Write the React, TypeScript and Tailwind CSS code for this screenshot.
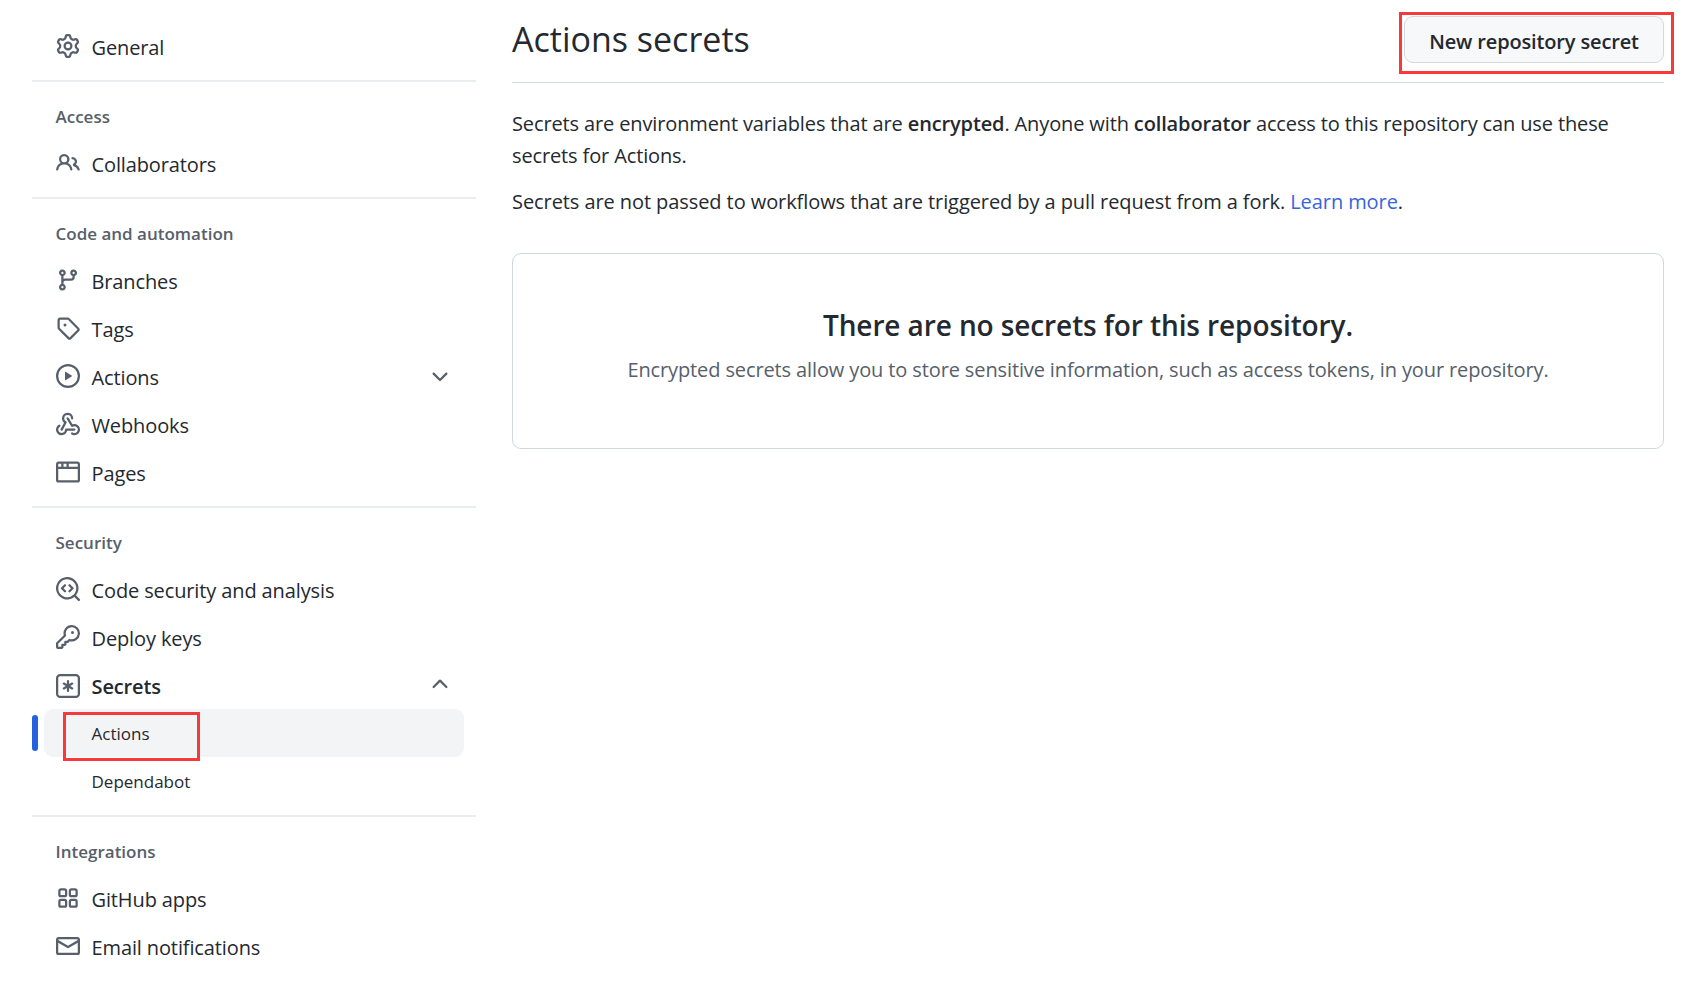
const icons = {
  gear: 'M8 0a8.2 8.2 0 0 1 .701.031C9.444.095 9.99.645 10.16 1.29l.288 1.107c.018.066.079.158.212.224.231.114.454.243.668.386.123.082.233.09.299.071l1.103-.303c.644-.176 1.392.021 1.82.63.27.385.506.792.704 1.218.315.675.111 1.422-.364 1.891l-.814.806c-.049.048-.098.147-.088.294.016.257.016.515 0 .772-.01.147.038.246.088.294l.814.806c.475.469.679 1.216.364 1.891a7.977 7.977 0 0 1-.704 1.217c-.428.61-1.176.807-1.82.63l-1.102-.302c-.067-.019-.177-.011-.3.071a5.909 5.909 0 0 1-.668.386c-.133.066-.194.158-.211.224l-.29 1.106c-.168.646-.715 1.196-1.458 1.26a8.006 8.006 0 0 1-1.402 0c-.743-.064-1.289-.614-1.458-1.26l-.289-1.106c-.018-.066-.079-.158-.212-.224a5.738 5.738 0 0 1-.668-.386c-.123-.082-.233-.09-.299-.071l-1.103.303c-.644.176-1.392-.021-1.82-.63a8.12 8.12 0 0 1-.704-1.218c-.315-.675-.111-1.422.363-1.891l.815-.806c.05-.048.098-.147.088-.294a6.214 6.214 0 0 1 0-.772c.01-.147-.038-.246-.088-.294l-.815-.806C.635 6.045.431 5.298.746 4.623a7.92 7.92 0 0 1 .704-1.217c.428-.61 1.176-.807 1.82-.63l1.102.302c.067.019.177.011.3-.071.214-.143.437-.272.668-.386.133-.066.194-.158.211-.224l.29-1.106C6.009.645 6.556.095 7.299.03 7.53.01 7.764 0 8 0Zm-.571 1.525c-.036.003-.108.036-.137.146l-.289 1.105c-.147.561-.549.967-.998 1.189-.173.086-.34.183-.5.29-.417.278-.97.423-1.529.27l-1.103-.303c-.109-.03-.175.016-.195.045-.22.312-.412.644-.573.99-.014.031-.021.11.059.19l.815.806c.411.406.562.957.53 1.456a4.709 4.709 0 0 0 0 .582c.032.499-.119 1.05-.53 1.456l-.815.806c-.081.08-.073.159-.059.19.162.346.353.677.573.989.02.03.085.076.195.046l1.102-.303c.56-.153 1.113-.008 1.53.27.161.107.328.204.501.29.447.222.85.629.997 1.189l.289 1.105c.029.109.101.143.137.146a6.6 6.6 0 0 0 1.142 0c.036-.003.108-.036.137-.146l.289-1.105c.147-.561.549-.967.998-1.189.173-.086.34-.183.5-.29.417-.278.97-.423 1.529-.27l1.103.303c.109.029.175-.016.195-.045.22-.313.411-.644.573-.99.014-.031.021-.11-.059-.19l-.815-.806c-.411-.406-.562-.957-.53-1.456a4.709 4.709 0 0 0 0-.582c-.032-.499.119-1.05.53-1.456l.815-.806c.081-.08.073-.159.059-.19a6.464 6.464 0 0 0-.573-.989c-.02-.03-.085-.076-.195-.046l-1.102.303c-.56.153-1.113.008-1.53-.27a4.44 4.44 0 0 0-.501-.29c-.447-.222-.85-.629-.997-1.189l-.289-1.105c-.029-.11-.101-.143-.137-.146a6.6 6.6 0 0 0-1.142 0ZM11 8a3 3 0 1 1-6 0 3 3 0 0 1 6 0ZM9.5 8a1.5 1.5 0 1 0-3.001.001A1.5 1.5 0 0 0 9.5 8Z',
  people: 'M2 5.5a3.5 3.5 0 1 1 5.898 2.549 5.508 5.508 0 0 1 3.034 4.084.75.75 0 1 1-1.482.235 4 4 0 0 0-7.9 0 .75.75 0 0 1-1.482-.236A5.507 5.507 0 0 1 3.102 8.05 3.493 3.493 0 0 1 2 5.5ZM11 4a3.001 3.001 0 0 1 2.22 5.018 5.01 5.01 0 0 1 2.56 3.012.749.749 0 0 1-.885.954.752.752 0 0 1-.549-.514 3.507 3.507 0 0 0-2.522-2.372.75.75 0 0 1-.574-.73v-.352a.75.75 0 0 1 .416-.672A1.5 1.5 0 0 0 11 5.5.75.75 0 0 1 11 4Zm-5.5-.5a2 2 0 1 0-.001 3.999A2 2 0 0 0 5.5 3.5Z',
  branch: 'M9.5 3.25a2.25 2.25 0 1 1 3 2.122V6A2.5 2.5 0 0 1 10 8.5H6a1 1 0 0 0-1 1v1.128a2.251 2.251 0 1 1-1.5 0V5.372a2.25 2.25 0 1 1 1.5 0v1.836A2.493 2.493 0 0 1 6 7h4a1 1 0 0 0 1-1v-.628A2.25 2.25 0 0 1 9.5 3.25Zm-6 0a.75.75 0 1 0 1.5 0 .75.75 0 0 0-1.5 0Zm8.25-.75a.75.75 0 1 0 0 1.5.75.75 0 0 0 0-1.5ZM4.25 12a.75.75 0 1 0 0 1.5.75.75 0 0 0 0-1.5Z',
  tag: 'M1 7.775V2.75C1 1.784 1.784 1 2.75 1h5.025c.464 0 .91.184 1.238.513l6.25 6.25a1.75 1.75 0 0 1 0 2.474l-5.026 5.026a1.75 1.75 0 0 1-2.474 0l-6.25-6.25A1.752 1.752 0 0 1 1 7.775Zm1.5 0c0 .066.026.13.073.177l6.25 6.25a.25.25 0 0 0 .354 0l5.025-5.025a.25.25 0 0 0 0-.354l-6.25-6.25a.25.25 0 0 0-.177-.073H2.75a.25.25 0 0 0-.25.25ZM6 5a1 1 0 1 1 0 2 1 1 0 0 1 0-2Z',
  play: 'M8 0a8 8 0 1 1 0 16A8 8 0 0 1 8 0ZM1.5 8a6.5 6.5 0 1 0 13 0 6.5 6.5 0 0 0-13 0Zm4.879-2.773 4.264 2.559a.25.25 0 0 1 0 .428l-4.264 2.559A.25.25 0 0 1 6 10.559V5.442a.25.25 0 0 1 .379-.215Z',
  webhook: 'M5.5 4.25a2.25 2.25 0 0 1 4.5 0 .75.75 0 0 0 1.5 0 3.75 3.75 0 1 0-6.14 2.889l-2.272 4.258a.75.75 0 0 0 1.324.706L7 7.25a.75.75 0 0 0-.309-1.015A2.25 2.25 0 0 1 5.5 4.25Z M7.364 3.607a.75.75 0 0 1 1.03.257l2.608 4.349a3.75 3.75 0 1 1-.628 6.785.75.75 0 0 1 .752-1.299 2.25 2.25 0 1 0-.033-3.88.75.75 0 0 1-1.03-.256L7.107 4.636a.75.75 0 0 1 .257-1.03Z M2.9 8.776A.75.75 0 0 1 2.625 9.8 2.25 2.25 0 1 0 6 11.75a.75.75 0 0 1 .75-.751h5.5a.75.75 0 0 1 0 1.5H7.425a3.751 3.751 0 1 1-5.55-3.998.75.75 0 0 1 1.024.274Z',
  browser: 'M0 2.75C0 1.784.784 1 1.75 1h12.5c.966 0 1.75.784 1.75 1.75v10.5A1.75 1.75 0 0 1 14.25 15H1.75A1.75 1.75 0 0 1 0 13.25ZM14.5 6h-13v7.25c0 .138.112.25.25.25h12.5a.25.25 0 0 0 .25-.25Zm-6-3.5v2h6V2.75a.25.25 0 0 0-.25-.25ZM5 2.5v2h2v-2Zm-3.25 0a.25.25 0 0 0-.25.25V4.5h2v-2Z',
  codescan: 'M8.47 4.97a.75.75 0 0 0 0 1.06L9.94 7.5 8.47 8.97a.75.75 0 1 0 1.06 1.06l2-2a.75.75 0 0 0 0-1.06l-2-2a.75.75 0 0 0-1.06 0ZM6.53 6.03a.75.75 0 0 0-1.06-1.06l-2 2a.75.75 0 0 0 0 1.06l2 2a.75.75 0 1 0 1.06-1.06L5.06 7.5l1.47-1.47Z M12.246 13.307a7.501 7.501 0 1 1 1.06-1.06l2.474 2.473a.749.749 0 0 1-.326 1.275.749.749 0 0 1-.734-.215ZM1.5 7.5a6.002 6.002 0 0 0 3.608 5.504 6.002 6.002 0 0 0 6.486-1.117.75.75 0 0 1 .292-.293A6 6 0 1 0 1.5 7.5Z',
  key: 'M10.5 0a5.499 5.499 0 1 1-1.288 10.848l-.932.932a.749.749 0 0 1-.53.22H7v.75a.749.749 0 0 1-.22.53l-.5.5a.749.749 0 0 1-.53.22H5v.75a.749.749 0 0 1-.22.53l-.5.5a.749.749 0 0 1-.53.22h-2A1.75 1.75 0 0 1 0 14.25v-2c0-.199.079-.389.22-.53l4.932-4.932A5.5 5.5 0 0 1 10.5 0Zm-4 5.5c-.001.431.069.86.205 1.269a.75.75 0 0 1-.181.768L1.5 12.56v1.69c0 .138.112.25.25.25h1.69l.06-.06v-1.19a.75.75 0 0 1 .75-.75h1.19l.06-.06v-1.19a.75.75 0 0 1 .75-.75h1.19l1.023-1.025a.75.75 0 0 1 .768-.18A4 4 0 1 0 6.5 5.5ZM11 6a1 1 0 1 1 0-2 1 1 0 0 1 0 2Z',
  asterisk: 'M0 2.75A2.75 2.75 0 0 1 2.75 0h10.5A2.75 2.75 0 0 1 16 2.75v10.5A2.75 2.75 0 0 1 13.25 16H2.75A2.75 2.75 0 0 1 0 13.25ZM2.75 1.5c-.69 0-1.25.56-1.25 1.25v10.5c0 .69.56 1.25 1.25 1.25h10.5c.69 0 1.25-.56 1.25-1.25V2.75c0-.69-.56-1.25-1.25-1.25Z M8 4a.75.75 0 0 1 .75.75V6.7l1.69-.975a.75.75 0 0 1 .75 1.3L9.5 8l1.69.976a.75.75 0 0 1-.75 1.298L8.75 9.3v1.95a.75.75 0 0 1-1.5 0V9.299l-1.69.975a.75.75 0 0 1-.75-1.299L6.5 8l-1.69-.975a.75.75 0 0 1 .75-1.3l1.69.976V4.75A.75.75 0 0 1 8 4Z',
  apps: 'M1.5 3.25c0-.966.784-1.75 1.75-1.75h2.5c.966 0 1.75.784 1.75 1.75v2.5A1.75 1.75 0 0 1 5.75 7.5h-2.5A1.75 1.75 0 0 1 1.5 5.75Zm7 0c0-.966.784-1.75 1.75-1.75h2.5c.966 0 1.75.784 1.75 1.75v2.5a1.75 1.75 0 0 1-1.75 1.75h-2.5A1.75 1.75 0 0 1 8.5 5.75Zm-7 7c0-.966.784-1.75 1.75-1.75h2.5c.966 0 1.75.784 1.75 1.75v2.5a1.75 1.75 0 0 1-1.75 1.75h-2.5a1.75 1.75 0 0 1-1.75-1.75Zm7 0c0-.966.784-1.75 1.75-1.75h2.5c.966 0 1.75.784 1.75 1.75v2.5a1.75 1.75 0 0 1-1.75 1.75h-2.5a1.75 1.75 0 0 1-1.75-1.75ZM3.25 3a.25.25 0 0 0-.25.25v2.5c0 .138.112.25.25.25h2.5A.25.25 0 0 0 6 5.75v-2.5A.25.25 0 0 0 5.75 3Zm7 0a.25.25 0 0 0-.25.25v2.5c0 .138.112.25.25.25h2.5a.25.25 0 0 0 .25-.25v-2.5a.25.25 0 0 0-.25-.25ZM3 10.25v2.5c0 .138.112.25.25.25h2.5a.25.25 0 0 0 .25-.25v-2.5a.25.25 0 0 0-.25-.25h-2.5a.25.25 0 0 0-.25.25Zm7.25-.25a.25.25 0 0 0-.25.25v2.5c0 .138.112.25.25.25h2.5a.25.25 0 0 0 .25-.25v-2.5a.25.25 0 0 0-.25-.25Z',
  mail: 'M1.75 2h12.5c.966 0 1.75.784 1.75 1.75v8.5A1.75 1.75 0 0 1 14.25 14H1.75A1.75 1.75 0 0 1 0 12.25v-8.5C0 2.784.784 2 1.75 2ZM1.5 12.251c0 .138.112.25.25.25h12.5a.25.25 0 0 0 .25-.25V5.809L8.38 9.397a.75.75 0 0 1-.76 0L1.5 5.809v6.442Zm13-8.181v-.32a.25.25 0 0 0-.25-.25H1.75a.25.25 0 0 0-.25.25v.32L8 7.88Z',
  chevronDown: 'M12.78 5.22a.749.749 0 0 1 0 1.06l-4.25 4.25a.749.749 0 0 1-1.06 0L3.22 6.28a.749.749 0 1 1 1.06-1.06L8 8.939l3.72-3.719a.749.749 0 0 1 1.06 0Z',
  chevronUp: 'M3.22 10.53a.749.749 0 0 1 0-1.06l4.25-4.25a.749.749 0 0 1 1.06 0l4.25 4.25a.749.749 0 1 1-1.06 1.06L8 6.811 4.28 10.53a.749.749 0 0 1-1.06 0Z',
};

function Octicon({ name, className }: { name: keyof typeof icons; className?: string }) {
  return (
    <svg viewBox="0 0 16 16" fill="currentColor" className={className}>
      <path d={icons[name]} />
    </svg>
  );
}

function NavRow({ icon, label, chevron }: { icon: keyof typeof icons; label: string; chevron?: boolean }) {
  return (
    <div className="flex h-12 items-center pl-6 pr-6">
      <Octicon name={icon} className="mb-[2px] h-6 w-6 shrink-0 text-[#57606a]" />
      <span className="ml-[11.5px] flex-1 pt-[2px] text-[20px] tracking-[-0.12px] text-[#24292f]">{label}</span>
      {chevron && <Octicon name="chevronDown" className="h-6 w-6 text-[#57606a]" />}
    </div>
  );
}

function GroupHeading({ children }: { children: string }) {
  return <div className="pb-[10px] pl-[23.5px] pt-[22px] text-[17px] font-semibold leading-[26px] text-[#57606a]">{children}</div>;
}

function Divider() {
  return <div className="mt-[9px] h-[2px] bg-[#e9edf0]" />;
}

function Sidebar() {
  return (
    <nav className="w-[444px] shrink-0 pt-[23px]">
      <NavRow icon="gear" label="General" />
      <Divider />

      <GroupHeading>Access</GroupHeading>
      <NavRow icon="people" label="Collaborators" />
      <Divider />

      <GroupHeading>Code and automation</GroupHeading>
      <NavRow icon="branch" label="Branches" />
      <NavRow icon="tag" label="Tags" />
      <NavRow icon="play" label="Actions" chevron />
      <NavRow icon="webhook" label="Webhooks" />
      <NavRow icon="browser" label="Pages" />
      <Divider />

      <GroupHeading>Security</GroupHeading>
      <NavRow icon="codescan" label="Code security and analysis" />
      <NavRow icon="key" label="Deploy keys" />
      <div className="flex h-[47px] items-center pl-6 pr-6">
        <Octicon name="asterisk" className="h-6 w-6 shrink-0 text-[#57606a]" />
        <span className="ml-[11.5px] flex-1 pt-[2px] text-[20px] font-semibold tracking-[-0.12px] text-[#24292f]">Secrets</span>
        <Octicon name="chevronUp" className="mb-[3px] h-6 w-6 text-[#57606a]" />
      </div>
      <div className="relative ml-3 mr-3 flex h-12 items-center rounded-[9px] bg-[#f3f4f6] pl-[47.5px] pt-[2px] text-[17px] text-[#24292f]">
        Actions
        <span className="absolute -left-3 top-[6px] h-9 w-[6px] rounded-md bg-[#2563dd]" />
        <span className="absolute left-[19px] top-[3px] h-[49px] w-[137px] border-[3px] border-[#f63a3a]" />
      </div>
      <div className="flex h-[49px] items-center pl-[59.5px] pt-[1px] text-[17px] text-[#24292f]">Dependabot</div>
      <Divider />

      <GroupHeading>Integrations</GroupHeading>
      <NavRow icon="apps" label="GitHub apps" />
      <NavRow icon="mail" label="Email notifications" />
    </nav>
  );
}

export default function App() {
  return (
    <div className="flex min-h-[999px] bg-white pl-8 pr-[37px] font-['Open_Sans',sans-serif]">
      <Sidebar />
      <main className="ml-9 min-w-0 flex-1">
        <div className="flex h-[83px] items-start justify-between border-b border-[#d8dee4]">
          <h2 className="mt-[14px] text-[34px] font-normal leading-[50px] text-[#24292f]">Actions secrets</h2>
          <div className="relative mt-4">
            <button className="h-[47px] w-[260px] rounded-[9px] border border-[#d5d8dc] bg-[#f6f8fa] pt-1 text-[20px] font-semibold tracking-[-0.15px] text-[#24292f]">
              New repository secret
            </button>
            <span className="absolute -left-[5px] -right-[10px] -top-1 -bottom-[11px] border-[3px] border-[#f63a3a]" />
          </div>
        </div>
        <p className="mt-[25px] text-[20px] leading-[32px] tracking-[-0.13px] text-[#24292f]">
          Secrets are environment variables that are <strong className="font-semibold">encrypted</strong>. Anyone with{' '}
          <strong className="font-semibold">collaborator</strong> access to this repository can use these secrets for Actions.
        </p>
        <p className="mt-[14px] text-[20px] leading-[32px] tracking-[-0.08px] text-[#24292f]">
          Secrets are not passed to workflows that are triggered by a pull request from a fork.{' '}
          <a className="text-[#3565dc]">Learn more</a>.
        </p>
        <div className="mt-[35px] flex h-[196px] flex-col items-center rounded-[9px] border border-[#d0d7de] pt-[49px]">
          <h3 className="text-[28px] font-semibold leading-[44px] tracking-[-0.1px] text-[#24292f]">There are no secrets for this repository.</h3>
          <p className="mt-[7px] text-[20px] leading-[32px] tracking-[-0.12px] text-[#57606a]">
            Encrypted secrets allow you to store sensitive information, such as access tokens, in your repository.
          </p>
        </div>
      </main>
    </div>
  );
}
